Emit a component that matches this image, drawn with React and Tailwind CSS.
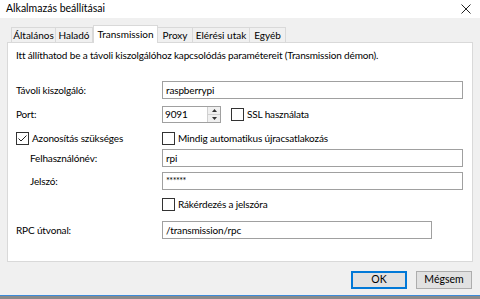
import React from "react";

const tabs = [
    { name: "Általános", w: "w-[45px]" },
    { name: "Haladó", w: "w-[37px]" },
    { name: "Transmission", w: "w-[65px]" },
    { name: "Proxy", w: "w-[35px]" },
    { name: "Elérési utak", w: "w-[57px]" },
    { name: "Egyéb", w: "w-[36px]" },
];

function Checkbox({ checked, label }) {
    return (
        <label className="flex items-center gap-[3px] text-[#000]">
            <span className="w-[13px] h-[13px] border border-[#333] bg-white flex items-center justify-center shrink-0">
                {checked && (
                    <svg width="11" height="11" viewBox="0 0 11 11">
                        <path d="M1.5 5.5 L4 8 L9.5 2.5" fill="none" stroke="#222" strokeWidth="1" />
                    </svg>
                )}
            </span>
            <span>{label}</span>
        </label>
    );
}

function TextBox({ value, className = "w-[301px]" }) {
    return (
        <div className={`h-[18px] border border-[#a0a0a0] bg-white flex items-center px-[3px] ${className}`}>
            {value}
        </div>
    );
}

function Row({ label, indent, children, className = "" }) {
    return (
        <div className={`flex items-center h-[18px] ${className}`}>
            <div className={`w-[146px] shrink-0 ${indent ? "pl-[14px]" : ""}`}>{label}</div>
            {children}
        </div>
    );
}

export default function App() {
    return (
        <div
            className="w-[480px] h-[299px] bg-[#f0f0f0] text-[10px] tracking-[-0.15px] text-black flex flex-col overflow-hidden"
            style={{ fontFamily: 'Lato, "Noto Sans", sans-serif' }}
        >
            {/* Title bar */}
            <div className="h-[18px] bg-white flex items-center justify-between pl-[6px] pr-[9px] shrink-0 text-[10.5px] tracking-normal">
                <span>Alkalmazás beállításai</span>
                <svg width="10" height="10" viewBox="0 0 10 10">
                    <path d="M0.5 0.5 L9.5 9.5 M9.5 0.5 L0.5 9.5" stroke="#222" strokeWidth="1" />
                </svg>
            </div>

            <div className="flex-1 flex flex-col px-[7px] pt-[7px]">
                {/* Tabs */}
                <div className="flex items-end h-[17px] pl-[4px] relative z-10 tracking-normal">
                    {tabs.map((t, i) =>
                        t.name === "Transmission" ? (
                            <div
                                key={t.name}
                                className={`${t.w} h-[18px] -mb-px bg-white border border-b-0 border-[#d9d9d9] flex items-center justify-center`}
                            >
                                {t.name}
                            </div>
                        ) : (
                            <div
                                key={t.name}
                                className={`${t.w} h-[15px] border-t border-r border-[#d9d9d9] flex items-center justify-center ${i === 0 ? "border-l" : ""}`}
                            >
                                {t.name}
                            </div>
                        )
                    )}
                </div>

                {/* Panel */}
                <div className="h-[220px] bg-white border border-[#d9d9d9] pl-[8px] pr-[7px] pt-[4px] flex flex-col">
                    <div className="h-[16px] flex items-center">
                        Itt állíthatod be a távoli kiszolgálóhoz kapcsolódás paramétereit (Transmission démon).
                    </div>

                    <Row label="Távoli kiszolgáló:" className="mt-[18px]">
                        <TextBox value="raspberrypi" />
                    </Row>

                    <Row label="Port:" className="mt-[6px]">
                        <div className="flex h-[17px] w-[59px] border border-[#a0a0a0] bg-white">
                            <div className="flex-1 flex items-center px-[2px]">9091</div>
                            <div className="w-[13px] flex flex-col border-l border-[#d0d0d0]">
                                <div className="flex-1 bg-[#f0f0f0] border-b border-[#d0d0d0] flex items-center justify-center">
                                    <svg width="5" height="3" viewBox="0 0 5 3"><path d="M0 3 L2.5 0 L5 3 Z" fill="#333" /></svg>
                                </div>
                                <div className="flex-1 bg-[#f0f0f0] flex items-center justify-center">
                                    <svg width="5" height="3" viewBox="0 0 5 3"><path d="M0 0 L2.5 3 L5 0 Z" fill="#333" /></svg>
                                </div>
                            </div>
                        </div>
                        <div className="ml-[10px]">
                            <Checkbox label="SSL használata" />
                        </div>
                    </Row>

                    <div className="flex items-center h-[18px] mt-[6px]">
                        <div className="w-[146px] shrink-0">
                            <Checkbox checked label="Azonosítás szükséges" />
                        </div>
                        <Checkbox label="Mindig automatikus újracsatlakozás" />
                    </div>

                    <Row label="Felhasználónév:" indent className="mt-[2px]">
                        <TextBox value="rpi" />
                    </Row>

                    <Row label="Jelszó:" indent className="mt-[5px]">
                        <TextBox value={<span className="text-[9px] tracking-[-0.5px]">******</span>} />
                    </Row>

                    <Row label="" className="mt-[5px]">
                        <Checkbox label="Rákérdezés a jelszóra" />
                    </Row>

                    <Row label="RPC útvonal:" className="mt-[8px]">
                        <TextBox value="/transmission/rpc" className="w-[270px]" />
                    </Row>
                </div>

                {/* Buttons */}
                <div className="flex justify-end gap-[9px] pr-[1px] mt-[9px] text-[10.5px] tracking-normal">
                    <button className="w-[56px] h-[18px] bg-[#e1e1e1] border-2 border-[#0078d7] flex items-center justify-center">
                        OK
                    </button>
                    <button className="w-[56px] h-[18px] bg-[#e1e1e1] border border-[#adadad] flex items-center justify-center">
                        Mégsem
                    </button>
                </div>
            </div>

            <div className="h-px bg-[#3c8ad8] shrink-0" />
            <div className="h-[3px] bg-[#8a8a8a] shrink-0" />
        </div>
    );
}
